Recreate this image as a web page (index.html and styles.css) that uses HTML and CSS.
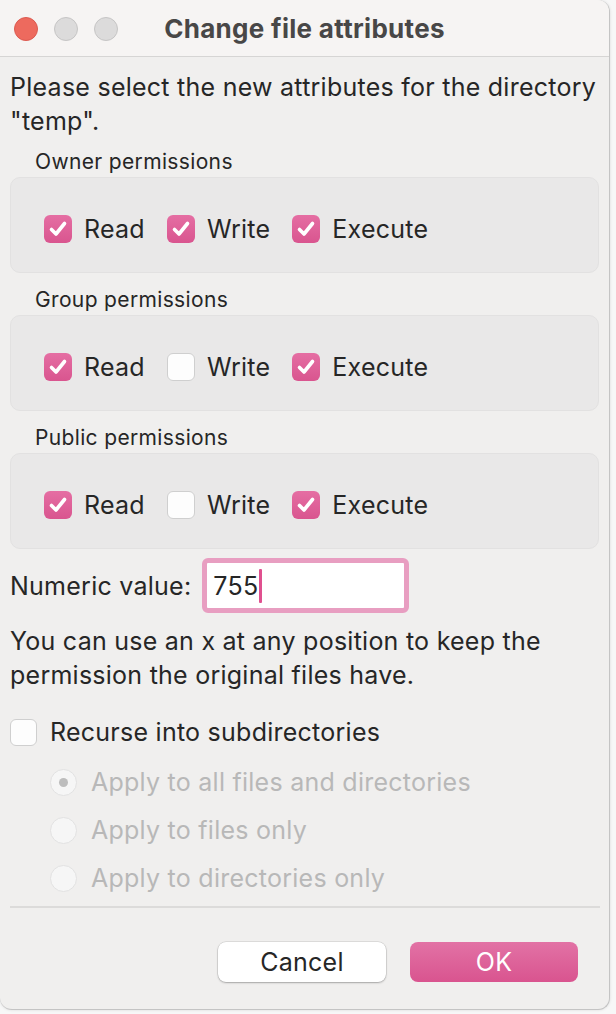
FILE: index.html
```html
<!DOCTYPE html>
<html lang="en">
<head>
<meta charset="utf-8">
<title>Change file attributes</title>
<link rel="stylesheet" href="styles.css">
</head>
<body>
<div class="window">
  <div class="titlebar">
    <div class="lights">
      <span class="light red"></span>
      <span class="light gray"></span>
      <span class="light gray"></span>
    </div>
    <div class="title">Change file attributes</div>
    <div class="spacer"></div>
  </div>
  <div class="content">
    <p class="intro">Please select the new attributes for the directory "temp".</p>

    <div class="section">
      <div class="section-label">Owner permissions</div>
      <div class="group">
        <label class="check"><span class="box on"><svg viewBox="0 0 28 28"><path d="M7.5 14.5 L12 19 L20.5 8.5"/></svg></span>Read</label>
        <label class="check"><span class="box on"><svg viewBox="0 0 28 28"><path d="M7.5 14.5 L12 19 L20.5 8.5"/></svg></span>Write</label>
        <label class="check"><span class="box on"><svg viewBox="0 0 28 28"><path d="M7.5 14.5 L12 19 L20.5 8.5"/></svg></span>Execute</label>
      </div>
    </div>

    <div class="section">
      <div class="section-label">Group permissions</div>
      <div class="group">
        <label class="check"><span class="box on"><svg viewBox="0 0 28 28"><path d="M7.5 14.5 L12 19 L20.5 8.5"/></svg></span>Read</label>
        <label class="check"><span class="box"></span>Write</label>
        <label class="check"><span class="box on"><svg viewBox="0 0 28 28"><path d="M7.5 14.5 L12 19 L20.5 8.5"/></svg></span>Execute</label>
      </div>
    </div>

    <div class="section">
      <div class="section-label">Public permissions</div>
      <div class="group">
        <label class="check"><span class="box on"><svg viewBox="0 0 28 28"><path d="M7.5 14.5 L12 19 L20.5 8.5"/></svg></span>Read</label>
        <label class="check"><span class="box"></span>Write</label>
        <label class="check"><span class="box on"><svg viewBox="0 0 28 28"><path d="M7.5 14.5 L12 19 L20.5 8.5"/></svg></span>Execute</label>
      </div>
    </div>

    <div class="numeric">
      <span class="numeric-label">Numeric value:</span>
      <div class="input"><span class="value">755</span><span class="caret"></span></div>
    </div>

    <p class="info">You can use an x at any position to keep the permission the original files have.</p>

    <label class="recurse"><span class="box plain"></span>Recurse into subdirectories</label>

    <div class="radios">
      <div class="radio"><span class="dot selected"></span>Apply to all files and directories</div>
      <div class="radio"><span class="dot"></span>Apply to files only</div>
      <div class="radio"><span class="dot"></span>Apply to directories only</div>
    </div>

    <div class="separator"></div>

    <div class="buttons">
      <button class="btn cancel">Cancel</button>
      <button class="btn ok">OK</button>
    </div>
  </div>
</div>
</body>
</html>
```

FILE: styles.css
```css
html, body {
  margin: 0;
  padding: 0;
}
body {
  background: #f7f7f7;
  font-family: "Inter", "Liberation Sans", Arial, sans-serif;
  color: #262626;
  width: 616px;
  height: 1014px;
  overflow: hidden;
}
.window {
  width: 609px;
  height: 1009px;
  background: #f0efee;
  border: 1px solid #c4c4c4;
  border-top: none;
  border-left: none;
  border-radius: 0 12px 12px 12px;
  box-shadow: 0 0 3px rgba(0,0,0,0.12);
  overflow: hidden;
  display: flex;
  flex-direction: column;
}
.titlebar {
  height: 56px;
  background: #f6f4f3;
  border-bottom: 1px solid #d6d5d4;
  display: grid;
  grid-template-columns: 1fr auto 1fr;
  align-items: center;
}
.lights {
  display: flex;
  gap: 16px;
  padding-left: 14px;
  padding-top: 1px;
}
.light {
  width: 24px;
  height: 24px;
  border-radius: 50%;
  box-sizing: border-box;
}
.light.red {
  background: #ed6a5e;
  border: 1px solid #dc5a50;
}
.light.gray {
  background: #dcdbdb;
  border: 1px solid #c6c5c5;
}
.title {
  font-weight: 700;
  font-size: 26px;
  letter-spacing: 0.3px;
  color: #484747;
}
.content {
  padding: 0 10px;
  flex: 1;
  display: flex;
  flex-direction: column;
  font-size: 25px;
  letter-spacing: 0.25px;
}
.intro {
  margin: 13px 0 0;
  line-height: 34px;
}
.section {
  margin-top: 12px;
}
.section + .section {
  margin-top: 15px;
}
.section-label {
  font-size: 21px;
  letter-spacing: 0.35px;
  line-height: 24px;
  padding-left: 25px;
  margin-bottom: 3px;
}
.group {
  height: 96px;
  box-sizing: border-box;
  background: #e9e8e8;
  border: 1px solid #e2e1e1;
  border-radius: 10px;
  display: flex;
  align-items: center;
  padding: 8px 0 0 33px;
  gap: 22px;
}
.check {
  display: flex;
  align-items: center;
  gap: 12px;
}
.box {
  width: 28px;
  height: 28px;
  border-radius: 6px;
  box-sizing: border-box;
  background: #fdfdfd;
  border: 1px solid #cfcfcf;
  display: flex;
  align-items: center;
  justify-content: center;
}
.box.on {
  background: linear-gradient(#e56ea3, #d9558f);
  border: none;
}
.box svg {
  width: 28px;
  height: 28px;
}
.box svg path {
  fill: none;
  stroke: #fff;
  stroke-width: 3.6;
  stroke-linecap: round;
  stroke-linejoin: round;
}
.numeric {
  display: flex;
  align-items: center;
  margin-top: 9px;
  gap: 11px;
}
.input {
  width: 207px;
  height: 55px;
  box-sizing: border-box;
  border: 5px solid #e89ec1;
  border-radius: 6px;
  background: #fff;
  display: flex;
  align-items: center;
  padding-left: 6px;
}
.caret {
  width: 3px;
  height: 34px;
  background: #e0508f;
  border-radius: 1px;
  margin-left: 1px;
}
.info {
  margin: 11px 0 0;
  line-height: 34px;
}
.recurse {
  margin-top: 23px;
  display: flex;
  align-items: center;
  gap: 13px;
  line-height: 34px;
}
.box.plain {
  width: 27px;
  height: 27px;
}
.radios {
  padding-left: 40px;
  margin-top: 16px;
  display: flex;
  flex-direction: column;
  gap: 14px;
}
.radio {
  display: flex;
  align-items: center;
  gap: 14px;
  line-height: 34px;
  color: #b8b8b8;
}
.dot {
  width: 27px;
  height: 27px;
  border-radius: 50%;
  box-sizing: border-box;
  background: #f6f6f6;
  border: 1px solid #e2e2e2;
  display: flex;
  align-items: center;
  justify-content: center;
}
.dot.selected::after {
  content: "";
  width: 9px;
  height: 9px;
  border-radius: 50%;
  background: #bdbdbd;
}
.separator {
  height: 2px;
  background: #dcdbda;
  margin-top: 11px;
  margin-right: -1px;
}
.buttons {
  display: flex;
  justify-content: flex-end;
  gap: 24px;
  margin-top: 34px;
  padding-right: 21px;
}
.btn {
  width: 168px;
  height: 40px;
  border-radius: 8px;
  font-family: "Inter", "Liberation Sans", Arial, sans-serif;
  font-size: 25px;
  letter-spacing: 0.25px;
  border: none;
  padding: 0;
}
.btn.cancel {
  background: #fff;
  color: #262626;
  box-shadow: 0 0 0 0.5px rgba(0,0,0,0.15), 0 1px 2px rgba(0,0,0,0.25);
}
.btn.ok {
  background: linear-gradient(#e272a5, #d9548f);
  color: #fff;
}
```
